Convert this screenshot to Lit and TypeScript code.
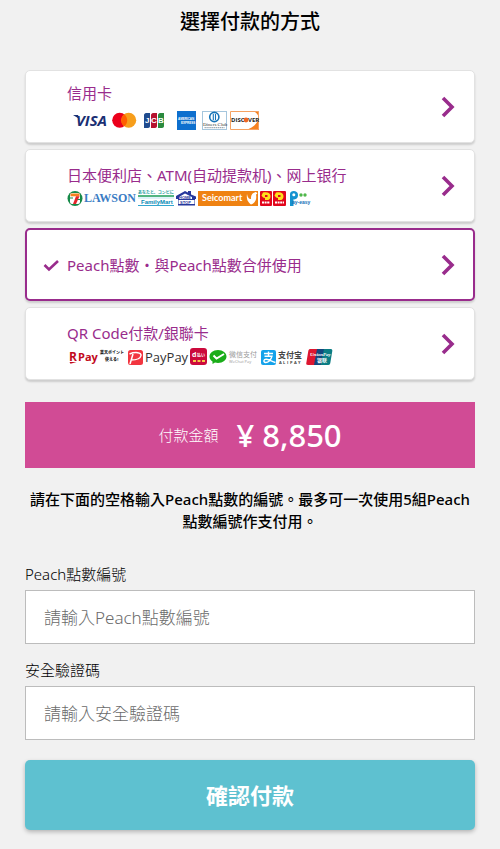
import { LitElement, html, css, svg } from "lit";
import { customElement, property, state } from "lit/decorators.js";
import { classMap } from "lit/directives/class-map.js";

const cardBrands = html`
  <svg class="brands" width="194" height="24" viewBox="0 -2 194 24" role="img" aria-label="VISA Mastercard JCB American Express Diners Club Discover">
    <path d="M6 5h5l1.500 4z" fill="#1a2f73" />
    <text x="9" y="16" font-size="15" font-weight="700" font-style="italic" font-family="Open Sans" fill="#1a2f73">VISA</text>
    <circle cx="52.7" cy="10.3" r="7.5" fill="#eb001b" />
    <circle cx="61.7" cy="10.3" r="7.5" fill="#f79e1b" />
    <path d="M57.2 4.3a7.5 7.5 0 0 1 0 12a7.5 7.5 0 0 1 0-12z" fill="#ff5f00" />
    <path d="M79 3h4v13c0 1-.8 2-2 2h-4V5c0-1 1-2 2-2z" fill="#1f4b8e" />
    <path d="M86 3h4v13c0 1-.8 2-2 2h-4V5c0-1 1-2 2-2z" fill="#b5132f" />
    <path d="M93 3h4v13c0 1-.8 2-2 2h-4V5c0-1 1-2 2-2z" fill="#2a8a3e" />
    <text y="13" font-size="8" font-weight="700" font-family="Liberation Sans" fill="#fff"><tspan x="78">J</tspan><tspan x="84">C</tspan><tspan x="91">B</tspan></text>
    <rect x="110" y="1" width="19" height="19" fill="#0d6fce" />
    <text x="111" y="10" font-size="3" font-weight="700" font-family="Liberation Sans" fill="#fff">AMERICAN</text>
    <text x="114" y="14" font-size="3" font-weight="700" font-family="Liberation Sans" fill="#fff">EXPRESS</text>
    <rect x="135.5" y="1.5" width="24" height="18" fill="#fff" stroke="#a5c6dd" />
    <circle cx="147.3" cy="7" r="4.6" fill="#fff" stroke="#1574b8" stroke-width="1.6" />
    <path d="M146.3 4v6M148.5 4v6" stroke="#1574b8" stroke-width="1.1" />
    <text x="136" y="16" font-size="5" font-family="Liberation Serif" fill="#333">Diners Club</text>
    <path d="M137.5 17.7h20" stroke="#8795a1" stroke-dasharray="1.4 .5" />
    <path d="M163 1h29v19h-29z" fill="#fff" />
    <path d="M178 20c8-2 12-6 14-12V20zM186 1c3 1 5 3 5.500 6V1z" fill="#f58220" />
    <path d="M163.500 1.500h28v18h-28z" fill="none" stroke="#f5a262" />
    <text y="12" font-size="6" font-weight="700" font-family="Open Sans" fill="#222"><tspan x="164">DISC</tspan><tspan x="181">VER</tspan></text>
    <circle cx="179" cy="10" r="2.400" fill="#ee6623" />
  </svg>
`;

const dailyBadge = (x: number, w: number) => svg`
  <rect x=${x} y="1" width=${w} height="15" rx="1" fill="#e2061c" />
  <path d="M${x + 3} 2.500c4-1 7.500 0 7.500 3.500s-2 4.500-5.500 4V8c-2 0-2.500-1-3.500-2.500z" fill="#ffdf1b" />
  <path d="M${x + 5} 5h2.500v2H${x + 5}z" fill="#e2061c" />
  <path d="M${x + 2} 12.500h${w - 4}" stroke="#fff" stroke-width="2" stroke-dasharray="2 .6" />
`;

const storeBrands = html`
  <svg class="brands" width="244" height="17" viewBox="0 0 244 17" role="img" aria-label="7-Eleven LAWSON FamilyMart Home Stop Seicomart Daily Pay-easy">
    <circle cx="8" cy="8.500" r="7.500" fill="#168a49" />
    <rect x="3" y="3" width="10" height="11" rx="2" fill="#fff" />
    <path d="M3.500 3.500h9v2.800H3.500z" fill="#f58220" />
    <path d="M9 6.300h3.500L9 14H6z" fill="#e4252b" />
    <path d="M3 8h3M10.500 9.500H13" stroke="#168a49" stroke-width="1.200" />
    <text x="17" y="12" font-size="12" font-weight="700" font-family="Liberation Serif" fill="#3a7cc4">LAWSON</text>
    <text x="71" y="4" font-size="4" font-weight="700" font-family="Noto Sans CJK JP" fill="#159a9a">あなたと、コンビに</text>
    <path d="M71 6h36" stroke="#1a9e58" stroke-width="1.600" />
    <path d="M71 8h36" stroke="#bfe6f2" />
    <text x="74" y="14" font-size="6" font-weight="700" font-family="Liberation Sans" fill="#0689b5">FamilyMart</text>
    <path d="M71 15.500h36" stroke="#33a6cf" />
    <path d="M109 6l9-5 3 1.500V1h3v3.500l5 2V9h-1v6.500h-17V9h-2z" fill="#26379c" />
    <path d="M112 7l6-3.500 7 3.500v2h-13zM111.500 10h16v4h-16z" fill="#fff" />
    <text x="112" y="9" font-size="4" font-weight="700" font-family="Liberation Sans" fill="#26379c">HOME</text>
    <text x="113" y="14" font-size="4" font-weight="700" font-family="Liberation Sans" fill="#26379c">STOP</text>
    <rect x="131" y="1" width="60" height="15" fill="#ef8212" />
    <text x="135" y="11" font-size="9" font-weight="700" font-family="Lato" fill="#fff">Seicomart</text>
    <path d="M180 4c1 5 3 5 4 5 0-4 1-6 5-7l1.500 1.500-1.500 1c1 5-1 8.500-5 10-2-2-5-4-4-10.500z" fill="#fff" />
    ${dailyBadge(193, 12)} ${dailyBadge(206, 13)}
    <path d="M223 16V4c0-4 8-4 8 .8 0 4-2.500 5-4.500 4.500V16z" fill="#1593d0" />
    <circle cx="226.800" cy="4.800" r="1.500" fill="#fff" />
    <circle cx="234" cy="5" r="1.700" fill="#4fb74a" />
    <circle cx="238" cy="5" r="1.700" fill="#4fb74a" />
    <text x="225" y="14" font-size="5" font-weight="700" font-family="Liberation Sans" fill="#1570b8">ay-easy</text>
  </svg>
`;

const qrBrands = html`
  <svg class="brands" width="266" height="17" viewBox="0 0 266 17" role="img" aria-label="R Pay PayPay d払い WeChat Pay ALIPAY UnionPay">
    <text x="2" y="13" font-size="12" font-weight="700" font-family="Open Sans" fill="#c20a20">R</text>
    <path d="M2.500 14h7l-6 1.800z" fill="#c20a20" />
    <text x="11" y="13" font-size="11" font-weight="700" font-family="Open Sans" fill="#c20a20">Pay</text>
    <text x="33" y="6" font-size="4" font-weight="900" font-family="Noto Sans CJK JP" fill="#222">楽天ポイント</text>
    <text x="38" y="13" font-size="4" font-weight="900" font-family="Noto Sans CJK JP" fill="#222">使える!</text>
    <rect x="61" y="2" width="15" height="15" rx="2.500" fill="#f2353f" />
    <path d="M63 16l3-10M62.500 6c6-2.500 12-1.500 11.500 1.500s-5 4.500-10 4.500" fill="none" stroke="#fff" stroke-width="1.500" />
    <text x="78" y="14" font-size="13" font-family="Open Sans" fill="#333">PayPay</text>
    <rect x="123" y="0" width="17" height="17" rx="3" fill="#cb0a3c" />
    <text x="125" y="9" font-size="7" font-weight="700" font-family="Open Sans" fill="#fff">d</text>
    <text x="130" y="9" font-size="4" font-weight="700" font-family="Noto Sans CJK JP" fill="#fff">払い</text>
    <path d="M126 13h3M130.500 13h3M135 13h3" stroke="#f7c64b" stroke-width="2" />
    <path d="M151 2c5 0 8.500 3 8.500 6.500S156 15 151 15c-1 0-2-.1-3-.4L145.500 16v-2.400c-2-1.300-3-3-3-5.100C142.500 5 146 2 151 2z" fill="#1aad19" />
    <path d="M146.500 7.500l3 3 7.500-4.500" fill="none" stroke="#fff" stroke-width="2" />
    <text x="162" y="9" font-size="7" font-family="Noto Sans CJK SC" fill="#999">微信支付</text>
    <text x="162" y="15" font-size="4" font-family="Open Sans" fill="#999">WeChat Pay</text>
    <rect x="194" y="2" width="15" height="15" rx="2" fill="#15a2ea" />
    <path d="M197 5.500h9M201.500 3.500v4.500M197.500 8.200h7.500c-1 4-4 6.500-6.500 6.300-2.500-.5-2-3.500 1-3.200 3 .3 5 2 9 3.200" fill="none" stroke="#fff" stroke-width="1.400" />
    <text x="211" y="10" font-size="8" font-weight="700" font-family="Noto Sans CJK SC" fill="#444">支付宝</text>
    <text y="16" font-size="4" font-weight="700" font-family="Open Sans" fill="#444"><tspan x="212">A</tspan><tspan x="216">L</tspan><tspan x="220">I</tspan><tspan x="223">P</tspan><tspan x="227">A</tspan><tspan x="231">Y</tspan></text>
    <path d="M243 1h10l-3 16h-9c-1.500 0-2-1-1.700-2l2-12c.2-1 .7-2 1.700-2z" fill="#dd1630" />
    <path d="M250 1h8l-3 16h-8z" fill="#13477d" />
    <path d="M257 1h7c1 0 1.500 1 1.300 2l-2 12c-.2 1-.8 2-2 2h-7.600z" fill="#0b7d84" />
    <text x="243" y="8" font-size="5" font-weight="700" font-style="italic" font-family="Liberation Serif" fill="#fff">UnionPay</text>
    <text x="250" y="14" font-size="5" font-weight="700" font-family="Noto Sans CJK SC" fill="#fff">银联</text>
  </svg>
`;

@customElement("payment-option")
export class PaymentOption extends LitElement {
  @property() label = "";
  @property({ attribute: false }) brands: unknown = null;
  @property({ type: Boolean }) selected = false;

  static styles = css`
    :host {
      display: block;
    }
    .card {
      box-sizing: border-box;
      display: flex;
      align-items: center;
      width: 100%;
      min-height: 73px;
      margin: 0;
      padding: 0 18px 0 16px;
      border: 1px solid #e2e2e2;
      border-radius: 5px;
      background: #fff;
      box-shadow: 0 2px 2px rgba(0, 0, 0, 0.15);
      color: #992c8c;
      font: inherit;
      line-height: 22px;
      text-align: left;
      cursor: pointer;
    }
    .card.selected {
      padding: 0 17px 0 15px;
      border: 2px solid #992c8c;
    }
    .mark {
      flex: none;
      display: flex;
      width: 25px;
    }
    .body {
      flex: 1;
      display: flex;
      flex-direction: column;
      gap: 4px;
    }
    .brands {
      display: block;
    }
    .chevron {
      flex: none;
    }
  `;

  render() {
    return html`
      <button
        class=${classMap({ card: true, selected: this.selected })}
        type="button"
        aria-pressed=${this.selected ? "true" : "false"}
      >
        <span class="mark">
          ${this.selected
            ? html`<svg width="18" height="14" viewBox="0 0 18 14" aria-hidden="true">
                <path d="M2.500 7l4.500 4.500L16 3" fill="none" stroke="#992c8c" stroke-width="2.600" />
              </svg>`
            : null}
        </span>
        <span class="body"><span>${this.label}</span>${this.brands}</span>
        <svg class="chevron" width="15" height="22" viewBox="0 0 15 22" aria-hidden="true">
          <path d="M2 2l9 9-9 9" fill="none" stroke="#992c8c" stroke-width="3.600" />
        </svg>
      </button>
    `;
  }
}

@customElement("app-root")
export class AppRoot extends LitElement {
  @state() private chosen = 2;

  private options = [
    { label: "信用卡", brands: cardBrands },
    { label: "日本便利店、ATM(自动提款机)、网上银行", brands: storeBrands },
    { label: "Peach點數・與Peach點數合併使用", brands: null },
    { label: "QR Code付款/銀聯卡", brands: qrBrands },
  ];

  static styles = css`
    :host {
      display: block;
      box-sizing: border-box;
      min-height: 100vh;
      padding: 8px 25px 20px;
      background: #f1f1f1;
      color: #000;
      font-family: "Noto Sans", "Noto Sans CJK TC", sans-serif;
      font-size: 15px;
      line-height: 22px;
    }
    h1 {
      margin: 0 0 34px;
      font-size: 20px;
      line-height: 28px;
      font-weight: 500;
      text-align: center;
    }
    .options {
      display: flex;
      flex-direction: column;
      gap: 6px;
    }
    .total {
      display: flex;
      align-items: center;
      justify-content: center;
      gap: 18px;
      min-height: 66px;
      margin: 22px 0 20px;
      background: #d14b95;
      color: #fff;
    }
    .total-label {
      font-weight: 300;
    }
    .amount {
      font-size: 31px;
      line-height: 40px;
      font-weight: 500;
    }
    .hint {
      margin: 0 0 31px;
      font-weight: 500;
      text-align: center;
    }
    .field {
      display: flex;
      flex-direction: column;
      gap: 5px;
      margin-bottom: 15px;
    }
    label {
      font-weight: 300;
    }
    input {
      box-sizing: border-box;
      width: 100%;
      height: 54px;
      padding: 0 18px;
      border: 1px solid #bcbcbc;
      border-radius: 0;
      background: #fff;
      color: #000;
      font: inherit;
      font-size: 17px;
      font-weight: 300;
    }
    input::placeholder {
      color: #6b6b6b;
    }
    .submit {
      display: block;
      width: 100%;
      min-height: 70px;
      margin-top: 20px;
      padding: 0;
      border: 0;
      border-radius: 5px;
      background: #5ec1d0;
      box-shadow: 0 2px 4px rgba(0, 0, 0, 0.25);
      color: #fff;
      font: inherit;
      font-size: 22px;
      font-weight: 700;
      cursor: pointer;
    }
  `;

  render() {
    return html`
      <h1>選擇付款的方式</h1>
      <div class="options">
        ${this.options.map(
          (o, i) => html`
            <payment-option
              .label=${o.label}
              .brands=${o.brands}
              .selected=${i === this.chosen}
              @click=${() => (this.chosen = i)}
            ></payment-option>
          `
        )}
      </div>
      <div class="total">
        <span class="total-label">付款金額</span>
        <span class="amount">¥ 8,850</span>
      </div>
      <p class="hint">請在下面的空格輸入Peach點數的編號。最多可一次使用5組Peach點數編號作支付用。</p>
      <div class="field">
        <label for="points">Peach點數編號</label>
        <input id="points" type="text" placeholder="請輸入Peach點數編號" />
      </div>
      <div class="field">
        <label for="pin">安全驗證碼</label>
        <input id="pin" type="text" placeholder="請輸入安全驗證碼" />
      </div>
      <button class="submit" type="button">確認付款</button>
    `;
  }
}
